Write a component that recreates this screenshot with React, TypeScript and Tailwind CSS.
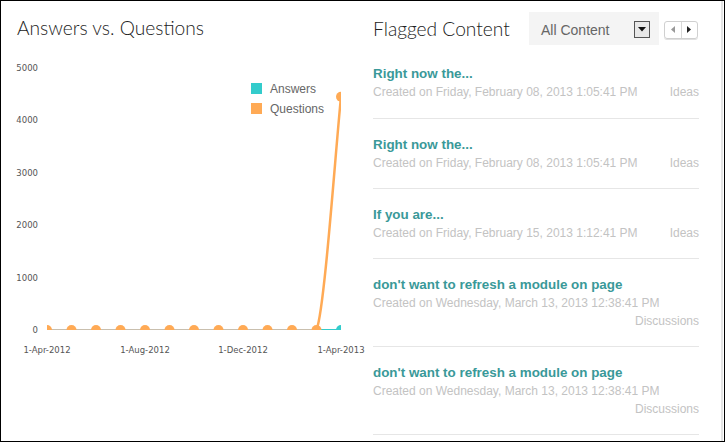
import React from 'react';

const flagged = [
  { title: 'Right now the...', date: 'Friday, February 08, 2013 1:05:41 PM', type: 'Ideas', wrap: false },
  { title: 'Right now the...', date: 'Friday, February 08, 2013 1:05:41 PM', type: 'Ideas', wrap: false },
  { title: 'If you are...', date: 'Friday, February 15, 2013 1:12:41 PM', type: 'Ideas', wrap: false },
  { title: "don't want to refresh a module on page", date: 'Wednesday, March 13, 2013 12:38:41 PM', type: 'Discussions', wrap: true },
  { title: "don't want to refresh a module on page", date: 'Wednesday, March 13, 2013 12:38:41 PM', type: 'Discussions', wrap: true },
];

// chart geometry (svg coords = page coords)
const X0 = 47;
const X1 = 341;
const BASE = 329;
const PER_K = 52.4;
const monthX = Array.from({ length: 12 }, (_, i) => X0 + (i * (X1 - X0)) / 12);

const Chart: React.FC = () => {
  const yLabels = [5000, 4000, 3000, 2000, 1000, 0];
  const xLabels = [
    { t: '1-Apr-2012', x: X0 },
    { t: '1-Aug-2012', x: X0 + (X1 - X0) / 3 },
    { t: '1-Dec-2012', x: X0 + (2 * (X1 - X0)) / 3 },
    { t: '1-Apr-2013', x: X1 },
  ];
  const topY = BASE - 4.45 * PER_K;
  const last = monthX[11];

  return (
    <svg width="370" height="380" viewBox="0 50 370 380" className="block overflow-visible">
      <defs>
        <clipPath id="plot">
          <rect x={X0} y={55} width={X1 - X0} height={BASE - 55} />
        </clipPath>
      </defs>
      {yLabels.map((v) => (
        <text
          key={v}
          x={38}
          y={BASE - (v / 1000) * PER_K + 3}
          textAnchor="end"
          fontSize="8.5"
          fill="#555"
          fontFamily="'DejaVu Sans', sans-serif"
        >
          {v}
        </text>
      ))}
      {xLabels.map((l) => (
        <text
          key={l.t}
          x={l.x}
          y={352}
          textAnchor="middle"
          fontSize="8.5"
          fill="#555"
          fontFamily="'DejaVu Sans', sans-serif"
        >
          {l.t}
        </text>
      ))}
      <g clipPath="url(#plot)">
        <line x1={X0} y1={BASE} x2={last} y2={BASE} stroke="#c9bfae" strokeWidth="2" />
        <line x1={last} y1={BASE} x2={X1} y2={BASE} stroke="#33cccc" strokeWidth="2" />
        {monthX.map((x) => (
          <circle key={x} cx={x} cy={BASE} r="5" fill="#ffaa55" />
        ))}
        <path
          d={`M ${last} ${BASE} C ${last + 8} ${BASE - 20}, ${X1 - 6} ${topY + 60}, ${X1} ${topY}`}
          fill="none"
          stroke="#ffaa55"
          strokeWidth="2.5"
        />
        <circle cx={X1} cy={topY} r="5" fill="#ffaa55" />
        <circle cx={X1} cy={BASE} r="5" fill="#33cccc" />
      </g>
    </svg>
  );
};

export default function App() {
  return (
    <div
      className="w-[725px] h-[442px] border border-black bg-white overflow-hidden"
      style={{ fontFamily: "'Liberation Sans', Arial, sans-serif" }}
    >
      <div className="w-[722px] h-full border-r-2 border-[#e4e4e4] flex">
        {/* Left: chart */}
        <div className="w-[355px] relative shrink-0">
          <h2 className="absolute left-[16px] top-[14px] text-[19.2px] leading-[26px] font-light text-[#222] font-['Lato',sans-serif] whitespace-nowrap">
            Answers vs. Questions
          </h2>
          <div className="pt-[50px] -ml-px">
            <Chart />
          </div>
          <div className="absolute left-[250px] top-[79px] flex flex-col gap-[3px] text-[12px] text-[#666]">
            <div className="flex items-center gap-[8px] h-[17px]">
              <span className="w-[11px] h-[11px] bg-[#33cccc]" />
              <span>Answers</span>
            </div>
            <div className="flex items-center gap-[8px] h-[17px]">
              <span className="w-[11px] h-[11px] bg-[#ffaa55]" />
              <span>Questions</span>
            </div>
          </div>
        </div>

        {/* Right: flagged content */}
        <div className="ml-[17px] w-[326px] flex flex-col">
          <div className="flex items-center h-[47px] pt-[10px] pb-[2px]">
            <h2 className="text-[19.2px] leading-[26px] font-light text-[#222] font-['Lato',sans-serif] w-[156px] whitespace-nowrap">
              Flagged Content
            </h2>
            <div className="w-[130px] h-[33px] bg-[#f4f4f4] flex items-center pl-[12px] pr-[9px]">
              <span className="text-[14px] text-[#666] flex-1 pt-[3px]">All Content</span>
              <span className="w-[16px] h-[17px] border border-[#555] bg-[#e8e8e8] flex items-center justify-center mt-[1px]">
                <svg width="8" height="5" viewBox="0 0 8 5">
                  <path d="M0 0 H8 L4 4.5 Z" fill="#111" />
                </svg>
              </span>
            </div>
            <div className="ml-[5px] w-[34px] h-[18px] mt-[2px] border border-[#d0d0d0] rounded-[3px] flex shadow-[0_1px_0_#e0e0e0]">
              <span className="flex-1 flex items-center justify-center border-r border-[#d8d8d8]">
                <svg width="4" height="7" viewBox="0 0 4 7">
                  <path d="M4 0 V7 L0 3.5 Z" fill="#999" />
                </svg>
              </span>
              <span className="flex-1 flex items-center justify-center">
                <svg width="4" height="7" viewBox="0 0 4 7">
                  <path d="M0 0 V7 L4 3.5 Z" fill="#222" />
                </svg>
              </span>
            </div>
          </div>
          <ul>
            {flagged.map((f, i) => (
              <li
                key={i}
                className={`pt-[17px] ${i === 0 ? 'pb-[17px]' : 'pb-[16px]'} border-b border-[#e6e6e6]`}
              >
                <div className="text-[13.4px] leading-[18px] font-bold text-[#3a9999]">{f.title}</div>
                {f.wrap ? (
                  <>
                    <div className="text-[12px] leading-[18px] text-[#c3c3c3]">Created on {f.date}</div>
                    <div className="text-[12px] leading-[18px] text-[#c3c3c3] text-right">{f.type}</div>
                  </>
                ) : (
                  <div className="text-[12px] leading-[18px] text-[#c3c3c3] flex justify-between">
                    <span>Created on {f.date}</span>
                    <span>{f.type}</span>
                  </div>
                )}
              </li>
            ))}
          </ul>
        </div>
      </div>
    </div>
  );
}
